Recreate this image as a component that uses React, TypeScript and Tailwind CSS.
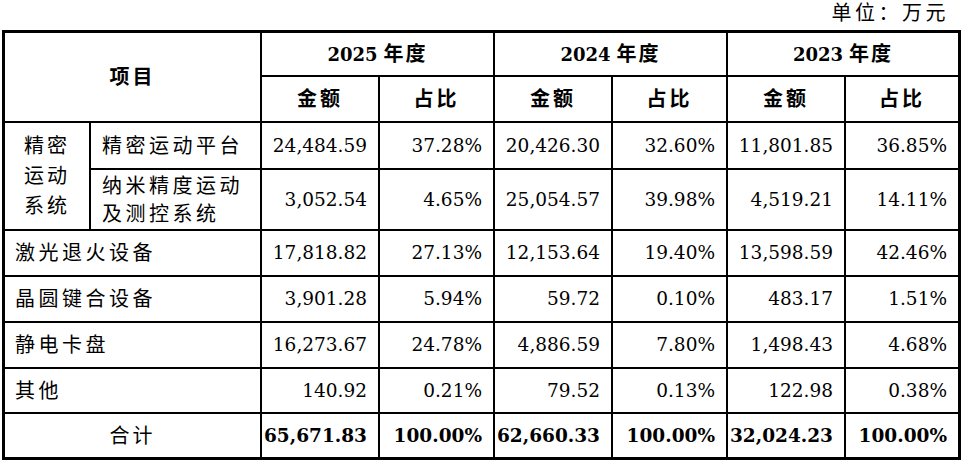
const FONT = "font-['DejaVu_Serif','Noto_Sans_CJK_SC',serif]";

type Row = {
  label: string;
  values: string[];
};

const rows: Row[] = [
  { label: "激光退火设备", values: ["17,818.82", "27.13%", "12,153.64", "19.40%", "13,598.59", "42.46%"] },
  { label: "晶圆键合设备", values: ["3,901.28", "5.94%", "59.72", "0.10%", "483.17", "1.51%"] },
  { label: "静电卡盘", values: ["16,273.67", "24.78%", "4,886.59", "7.80%", "1,498.43", "4.68%"] },
  { label: "其他", values: ["140.92", "0.21%", "79.52", "0.13%", "122.98", "0.38%"] },
];

const years = ["2025", "2024", "2023"];

function Num({ children, bold }: { children: string; bold?: boolean }) {
  return (
    <div
      className={`flex items-center justify-end bg-white pr-[11px] text-[18.5px] ${bold ? "font-bold" : ""}`}
    >
      {children}
    </div>
  );
}

function Label({ children, className = "" }: { children: React.ReactNode; className?: string }) {
  return (
    <div className={`flex items-center bg-white pl-[10px] text-[20px] leading-[28px] tracking-[3.5px] ${className}`}>
      {children}
    </div>
  );
}

export default function App() {
  return (
    <div className={`min-h-[464px] bg-white text-black ${FONT}`}>
      <div className="w-[961px]">
        <div className="h-[30px] pr-[12px] text-right text-[20px] leading-[27px] tracking-[3.5px]">
          单位：万元
        </div>
        <div className="ml-[2px] grid w-fit grid-cols-[84px_169px_116px_113px_116px_113px_116px_112px] grid-rows-[42px_44px_45px_59px_44px_44px_44px_43px_43px] gap-[2px] bg-black p-[3px]">
          {/* header */}
          <div className="col-span-2 row-span-2 flex items-center justify-center bg-white text-[20px] font-bold tracking-[3px]">
            项目
          </div>
          {years.map((y) => (
            <div
              key={y}
              className="col-span-2 flex items-center justify-center bg-white text-[18px] font-bold"
            >
              <span>{y}</span>
              <span className="ml-[6px] text-[20px] tracking-[2px]">年度</span>
            </div>
          ))}
          {years.map((y) => (
            <div key={`${y}-sub`} className="contents">
              <div className="flex items-center justify-center bg-white text-[20px] font-bold tracking-[3px]">
                金额
              </div>
              <div className="flex items-center justify-center bg-white text-[20px] font-bold tracking-[3px]">
                占比
              </div>
            </div>
          ))}

          {/* 精密运动系统 group */}
          <div className="row-span-2 flex items-center justify-center bg-white text-center text-[20px] leading-[30px] tracking-[3px]">
            精密
            <br />
            运动
            <br />
            系统
          </div>
          <Label className="pl-[11px]">精密运动平台</Label>
          <Num>24,484.59</Num>
          <Num>37.28%</Num>
          <Num>20,426.30</Num>
          <Num>32.60%</Num>
          <Num>11,801.85</Num>
          <Num>36.85%</Num>
          <Label className="pl-[11px]">
            <span>
              纳米精度运动
              <br />
              及测控系统
            </span>
          </Label>
          <Num>3,052.54</Num>
          <Num>4.65%</Num>
          <Num>25,054.57</Num>
          <Num>39.98%</Num>
          <Num>4,519.21</Num>
          <Num>14.11%</Num>

          {rows.map((r) => (
            <div key={r.label} className="contents">
              <Label className="col-span-2">{r.label}</Label>
              {r.values.map((v, i) => (
                <Num key={i}>{v}</Num>
              ))}
            </div>
          ))}

          {/* total */}
          <div className="col-span-2 flex items-center justify-center bg-white text-[20px] tracking-[3px]">
            合计
          </div>
          <Num bold>65,671.83</Num>
          <Num bold>100.00%</Num>
          <Num bold>62,660.33</Num>
          <Num bold>100.00%</Num>
          <Num bold>32,024.23</Num>
          <Num bold>100.00%</Num>
        </div>
      </div>
    </div>
  );
}
